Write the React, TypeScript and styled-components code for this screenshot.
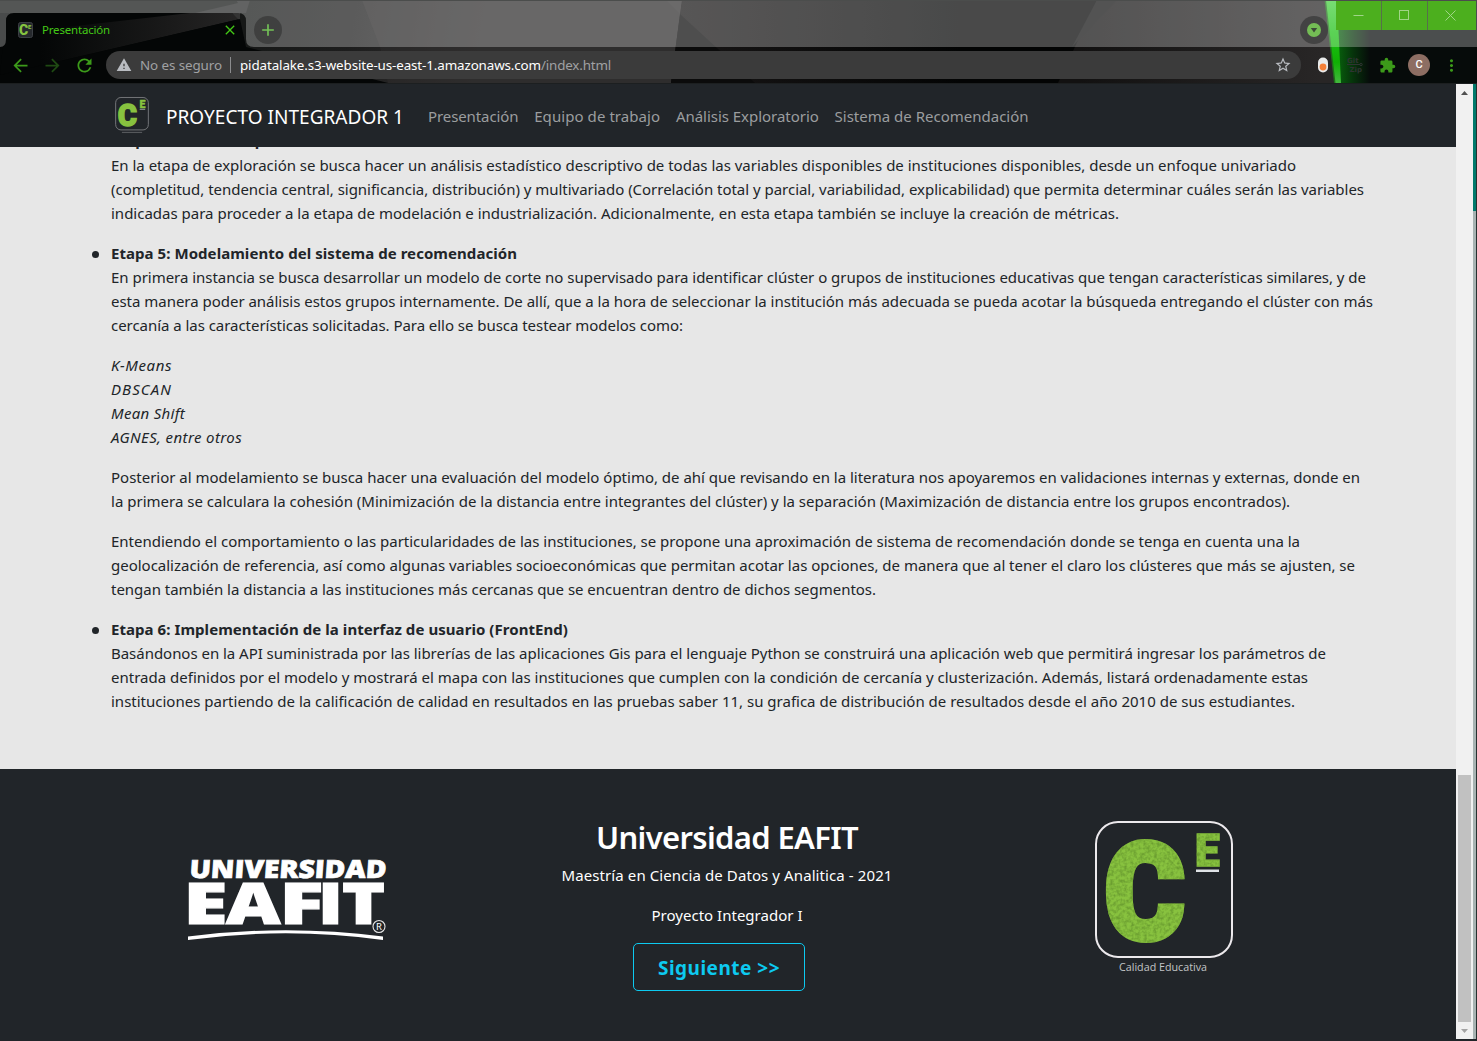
import React, { useLayoutEffect, useRef, useState } from "react";
import styled, { createGlobalStyle } from "styled-components";
import {
  MdAdd,
  MdArrowBack,
  MdArrowForward,
  MdClose,
  MdExtension,
  MdMoreVert,
  MdRefresh,
  MdStarBorder,
  MdWarning,
} from "react-icons/md";

const Global = createGlobalStyle`
  * { box-sizing: border-box; }
  body {
    margin: 0;
    background: #212529;
    font-family: "Noto Sans", "Open Sans", sans-serif;
    font-size: 15px;
    line-height: 24px;
    overflow: hidden;
  }
  svg { display: block; flex: none; }
`;

/* ---------- text that spreads over a given measure ---------- */

const Measure = styled.span`
  display: inline-block;
  white-space: pre;
  flex: none;
`;

function Fit({ w, children }: { w: number; children: string }) {
  const ref = useRef<HTMLSpanElement>(null);
  const [spacing, setSpacing] = useState(0);
  useLayoutEffect(() => {
    const el = ref.current;
    if (!el) return;
    const natural = el.getBoundingClientRect().width - spacing * children.length;
    setSpacing((w - natural) / children.length);
  }, [w, children]);
  return (
    <Measure ref={ref} style={{ letterSpacing: `${spacing}px` }}>
      {children}
    </Measure>
  );
}

/* ---------- browser window ---------- */

const Window = styled.div`
  width: 1477px;
  height: 1041px;
  display: flex;
  flex-direction: column;
  overflow: hidden;
  background: #212529;
`;

const Chrome = styled.header`
  position: relative;
  height: 84px;
  flex: none;
  color: #3c9a1a;
  border-bottom: 1px solid #1c1f20;
`;

const Backdrop = styled.svg`
  position: absolute;
  inset: 0;
`;

const TabStrip = styled.div`
  position: relative;
  height: 47px;
  display: flex;
  align-items: flex-start;
`;

const Tab = styled.div`
  margin: 13px 0 0 6px;
  width: 240px;
  height: 34px;
  padding: 0 8px 0 12px;
  display: flex;
  align-items: center;
  gap: 9px;
  color: #43c816;
  font-size: 11.5px;
`;

const Grow = styled.div`
  flex: 1;
`;

const Disc = styled.div<{ $top: number; $left: number }>`
  width: 28px;
  height: 28px;
  margin: ${(p) => p.$top}px 0 0 ${(p) => p.$left}px;
  border-radius: 50%;
  background: rgba(50, 50, 50, 0.65);
  color: #74c157;
  display: flex;
  align-items: center;
  justify-content: center;
`;

const WindowButtons = styled.div`
  display: flex;
  gap: 1px;
  margin: 1px 1px 0 8px;
  background: #56704a;
`;

const WindowButton = styled.div<{ $w: number; $pad?: number }>`
  width: ${(p) => p.$w}px;
  height: 29px;
  padding-right: ${(p) => p.$pad || 0}px;
  background: #4caf1e;
  display: flex;
  align-items: center;
  justify-content: center;
`;

const Toolbar = styled.div`
  position: relative;
  height: 36px;
  display: flex;
  align-items: center;
  padding-left: 9px;
`;

const ToolIcon = styled.div<{ $w: number; $dim?: boolean }>`
  width: ${(p) => p.$w}px;
  display: flex;
  justify-content: center;
  color: ${(p) => (p.$dim ? "#1f4a13" : "#3c9a1a")};
`;

const Address = styled.div`
  width: 1195px;
  height: 28px;
  border-radius: 14px;
  background: #3b3b3b;
  display: flex;
  align-items: center;
  padding: 0 9px 0 10px;
  font-size: 13.4px;
  color: #a0a1a3;
`;

const AddressRule = styled.div`
  width: 1px;
  height: 16px;
  background: #8b8c8e;
  margin: 0 9px 0 8px;
`;

const Host = styled.span`
  color: #fff;
`;

const AddressIcon = styled.div<{ $gap: number }>`
  margin-right: ${(p) => p.$gap}px;
  color: #b9bcc1;
`;

const Avatar = styled.div`
  width: 22px;
  height: 22px;
  margin: 0 10px 0 0;
  border-radius: 50%;
  background: #8d6e63;
  color: #fff;
  font: 500 11px/22px Roboto, sans-serif;
  text-align: center;
`;

/* ---------- page ---------- */

const Viewport = styled.div`
  display: flex;
  height: 955px;
  flex: none;
`;

const Page = styled.div`
  width: 1456px;
  display: flex;
  flex-direction: column;
  background: #e7e7e7;
  overflow: hidden;
`;

const Navbar = styled.nav`
  position: relative;
  z-index: 1;
  height: 63px;
  flex: none;
  background: #212529;
  display: flex;
  align-items: center;
  padding: 1px 0 0 112px;
`;

const NavLogo = styled.div`
  margin: -1px 14px 0 0;
`;

const Brand = styled.div`
  color: #fff;
  font-size: 19px;
  padding-top: 1px;
  margin-right: 24px;
`;

const NavLink = styled.a`
  color: #9b9d9f;
  margin-right: 15.7px;
`;

const Content = styled.main`
  flex: 1;
  margin-top: -18px;
  color: #212529;
`;

const Stages = styled.ul`
  margin: 0;
  padding: 0 0 0 111px;
  list-style: none;
`;

const Stage = styled.li`
  position: relative;

  &::before {
    content: "";
    position: absolute;
    left: -19px;
    top: 10px;
    width: 7px;
    height: 7px;
    border-radius: 50%;
    background: #212529;
  }
`;

const Paragraph = styled.p<{ $italic?: boolean }>`
  margin: 0 0 16px;
  font-style: ${(p) => (p.$italic ? "italic" : "normal")};
`;

const Line = styled.span<{ $bold?: boolean; $lift?: boolean }>`
  display: flex;
  align-items: center;
  height: 24px;
  padding-bottom: ${(p) => (p.$lift ? 3 : 0)}px;
  font-weight: ${(p) => (p.$bold ? 700 : 400)};
`;

/* ---------- footer ---------- */

const Footer = styled.footer`
  height: 270px;
  flex: none;
  background: #212529;
  color: #fff;
  display: grid;
  grid-template-columns: 438px 438px 438px;
  padding: 48px 0 0 70px;
`;

const FooterCell = styled.div<{ $top: number; $right?: number }>`
  display: flex;
  flex-direction: column;
  align-items: center;
  padding-top: ${(p) => p.$top}px;
  padding-right: ${(p) => p.$right || 0}px;
`;

const FooterTitle = styled.h2`
  margin: 1px 0 7px;
  font-size: 31px;
  line-height: 38px;
  font-weight: 600;
`;

const FooterText = styled.p`
  margin: 0 0 16px;
`;

const NextButton = styled.button`
  width: 172px;
  height: 48px;
  margin: 0 16px 0 0;
  padding: 1px 0 0;
  border: 1px solid #0dcaf0;
  border-radius: 5px;
  background: transparent;
  color: #0dcaf0;
  font: 700 19px/30px "Noto Sans", sans-serif;
`;

/* ---------- scrollbar ---------- */

const Scrollbar = styled.div`
  width: 17px;
  background: #f1f1f1;
  display: flex;
  flex-direction: column;
  align-items: center;
`;

const Arrow = styled.div`
  height: 17px;
  display: flex;
  align-items: center;
`;

const Thumb = styled.div`
  width: 13px;
  height: 247px;
  margin-top: 674px;
  background: #c1c1c1;
`;

const Edge = styled.div`
  width: 4px;
  border-right: 1px solid #26302f;
  background: linear-gradient(#00796b 127px, #a8b3b2 127px);
`;

/* ---------- drawings ---------- */

function ChromeArt() {
  return (
    <Backdrop width="1477" height="83" viewBox="0 0 1477 83">
      <defs>
        <linearGradient id="wedge" gradientUnits="userSpaceOnUse" x1="40" y1="0" x2="240" y2="0">
          <stop offset="0" stopColor="#040606" />
          <stop offset="1" stopColor="#262525" />
        </linearGradient>
        <linearGradient id="left" gradientUnits="userSpaceOnUse" x1="250" y1="0" x2="480" y2="40">
          <stop offset="0" stopColor="#161817" />
          <stop offset="0.45" stopColor="#1d1d1d" />
          <stop offset="1" stopColor="#2f2e2e" />
        </linearGradient>
        <linearGradient id="mid" gradientUnits="userSpaceOnUse" x1="680" y1="0" x2="960" y2="0">
          <stop offset="0" stopColor="#171515" />
          <stop offset="1" stopColor="#030404" />
        </linearGradient>
        <linearGradient id="right" gradientUnits="userSpaceOnUse" x1="1080" y1="0" x2="1320" y2="0">
          <stop offset="0" stopColor="#121111" />
          <stop offset="1" stopColor="#282626" />
        </linearGradient>
        <linearGradient id="glow" gradientUnits="userSpaceOnUse" x1="1336" y1="0" x2="1370" y2="0">
          <stop offset="0" stopColor="#07650c" />
          <stop offset="0.5" stopColor="#06330b" />
          <stop offset="1" stopColor="#060b0a" />
        </linearGradient>
        <linearGradient id="beam" gradientUnits="userSpaceOnUse" x1="0" y1="0" x2="0" y2="83">
          <stop offset="0" stopColor="#46cf40" />
          <stop offset="0.4" stopColor="#1cc014" />
          <stop offset="0.75" stopColor="#10b004" />
          <stop offset="1" stopColor="#43b83e" />
        </linearGradient>
      </defs>
      <rect width="1477" height="83" fill="#040606" />
      <path d="M0 0 H240 V19 L0 13 Z" fill="#121514" />
      <path d="M6 13 H246 V47 L0 75 Z" fill="#040606" />
      <path d="M0 75 L240 19 L232 13 L190 13 L40 30 Z" fill="url(#wedge)" />
      <path d="M232 13 L246 13 L246 24 L239 20 Z" fill="#343434" />
      <path d="M240 0 H682 L671 83 H240 Z" fill="url(#left)" />
      <path d="M195 13 L238 3 L236 0 H250 L246 13 Z" fill="#262727" />
      <path d="M0 83 L0 75 L240 19 L246 47 L388 83 Z" fill="#040606" />
      <path d="M362 0 L682 0 L671 83 L388 83 L380 47 Z" fill="#2d2b2b" opacity="0.5" />
      <path d="M666 0 L682 0 L680 14 Z" fill="#333131" />
      <path d="M682 0 H1105 L1060 83 H671 Z" fill="url(#mid)" />
      <path d="M680 14 L755 83 H671 Z" fill="#0b0b0b" />
      <path d="M1097 0 H1340 V83 H1058 Z" fill="url(#right)" />
      <path d="M1097 0 H1117 L1072 47 Z" fill="#111111" />
      <path d="M1336 0 H1477 V83 H1340 Z" fill="url(#glow)" />
      <path d="M1324.500 0 L1328 0 L1337 83 L1334 83 Z" fill="#1b8d15" opacity="0.7" />
      <path d="M1326 0 L1337 0 L1341 83 L1335.500 83 Z" fill="url(#beam)" />
      <path
        d="M0 0 H1477 V47 H254 Q246 47 246 39 V21 Q246 13 238 13 H14 Q6 13 6 21 V39 Q6 47 0 47 Z"
        fill="#fff"
        opacity="0.28"
      />
      <rect width="1477" height="1" fill="#4b4d4c" />
    </Backdrop>
  );
}

function QualityLogo({ w, h, id, caption }: { w: number; h: number; id: string; caption?: boolean }) {
  return (
    <svg width={w} height={h} viewBox="0 0 140 154" overflow="visible">
      <defs>
        <filter
          id={id}
          filterUnits="userSpaceOnUse"
          x="0"
          y="0"
          width="140"
          height="154"
          colorInterpolationFilters="sRGB"
        >
          <feTurbulence type="fractalNoise" baseFrequency="0.3" numOctaves="2" seed="4" />
          <feColorMatrix values="0 0 0 0 0.42  0 0 0 0 0.62  0 0 0 0 0.19  2.4 0 0 0 -0.9" />
          <feComposite in2="SourceGraphic" operator="in" result="grain" />
          <feMerge>
            <feMergeNode in="SourceGraphic" />
            <feMergeNode in="grain" />
          </feMerge>
        </filter>
      </defs>
      <rect
        x="2"
        y="2"
        width="136"
        height="135"
        rx="22"
        fill="none"
        stroke={caption ? "#ece9ec" : "#77797c"}
        strokeWidth={caption ? 2 : 4}
      />
      <g
        fill="#88c23f"
        stroke="#88c23f"
        filter={caption ? `url(#${id})` : undefined}
        fontFamily="Roboto"
        fontWeight="900"
      >
        <text transform="translate(10.500 118.7) scale(0.92 1)" fontSize="133" strokeWidth="6">
          C
        </text>
        <text transform="translate(101 46) scale(0.98 1)" fontSize="45" strokeWidth="1.5">
          E
        </text>
      </g>
      <rect x="102" y="49.5" width="23" height="2.5" fill="#dfe3e6" />
      {caption ? (
        <text
          x="25"
          y="151"
          fontFamily="Open Sans"
          fontSize="10.5"
          fill="#c3c5c7"
          textLength="88"
          lengthAdjust="spacingAndGlyphs"
        >
          Calidad Educativa
        </text>
      ) : (
        <rect x="28" y="145" width="84" height="5" fill="#55585b" />
      )}
    </svg>
  );
}

const eafit: [string, number, number][] = [
  ["E", -4.5, 44],
  ["A", 38, 54.5],
  ["F", 91.5, 44],
  ["I", 130, 25],
  ["T", 154, 43],
];

function EafitLogo() {
  return (
    <svg
      width="200"
      height="86"
      viewBox="0 0 200 86"
      fill="#fff"
      fontFamily="Open Sans"
      fontWeight="800"
      overflow="visible"
    >
      <text
        transform="translate(1 20.5) skewX(-4)"
        fontSize="25"
        textLength="197"
        lengthAdjust="spacingAndGlyphs"
        stroke="#fff"
        strokeWidth="0.7"
      >
        UNIVERSIDAD
      </text>
      <g fontSize="56.500" stroke="#fff" strokeWidth="1.2">
        {eafit.map(([c, x, w]) => (
          <text key={c} x={x} y="66.500" textLength={w} lengthAdjust="spacingAndGlyphs">
            {c}
          </text>
        ))}
      </g>
      <circle cx="191" cy="69.5" r="6" fill="#212529" stroke="#e6e6e6" strokeWidth="1.1" />
      <text x="188" y="73" fontSize="9.5" fontWeight="400" fontFamily="Noto Sans">
        R
      </text>
      <path d="M0 79.5 Q98 67 195 79.5 V83 Q98 69.5 0 83 Z" />
    </svg>
  );
}

/* ---------- copy ---------- */

type Row = [string, number];

const stages: { title: Row; blocks: { italic?: boolean; rows: Row[] }[] }[] = [
  {
    title: ["Etapa 4: Análisis exploratorio", 220],
    blocks: [
      {
        rows: [
          ["En la etapa de exploración se busca hacer un análisis estadístico descriptivo de todas las variables disponibles de instituciones disponibles, desde un enfoque univariado", 1185],
          ["(completitud, tendencia central, significancia, distribución) y multivariado (Correlación total y parcial, variabilidad, explicabilidad) que permita determinar cuáles serán las variables", 1253],
          ["indicadas para proceder a la etapa de modelación e industrialización. Adicionalmente, en esta etapa también se incluye la creación de métricas.", 1008],
        ],
      },
    ],
  },
  {
    title: ["Etapa 5: Modelamiento del sistema de recomendación", 406],
    blocks: [
      {
        rows: [
          ["En primera instancia se busca desarrollar un modelo de corte no supervisado para identificar clúster o grupos de instituciones educativas que tengan características similares, y de", 1255],
          ["esta manera poder análisis estos grupos internamente. De allí, que a la hora de seleccionar la institución más adecuada se pueda acotar la búsqueda entregando el clúster con más", 1262],
          ["cercanía a las características solicitadas. Para ello se busca testear modelos como:", 572],
        ],
      },
      {
        italic: true,
        rows: [
          ["K-Means", 61],
          ["DBSCAN", 61],
          ["Mean Shift", 74],
          ["AGNES, entre otros", 131],
        ],
      },
      {
        rows: [
          ["Posterior al modelamiento se busca hacer una evaluación del modelo óptimo, de ahí que revisando en la literatura nos apoyaremos en validaciones internas y externas, donde en", 1249],
          ["la primera se calculara la cohesión (Minimización de la distancia entre integrantes del clúster) y la separación (Maximización de distancia entre los grupos encontrados).", 1179],
        ],
      },
      {
        rows: [
          ["Entendiendo el comportamiento o las particularidades de las instituciones, se propone una aproximación de sistema de recomendación donde se tenga en cuenta una la", 1189],
          ["geolocalización de referencia, así como algunas variables socioeconómicas que permitan acotar las opciones, de manera que al tener el claro los clústeres que más se ajusten, se", 1244],
          ["tengan también la distancia a las instituciones más cercanas que se encuentran dentro de dichos segmentos.", 765],
        ],
      },
    ],
  },
  {
    title: ["Etapa 6: Implementación de la interfaz de usuario (FrontEnd)", 457],
    blocks: [
      {
        rows: [
          ["Basándonos en la API suministrada por las librerías de las aplicaciones Gis para el lenguaje Python se construirá una aplicación web que permitirá ingresar los parámetros de", 1215],
          ["entrada definidos por el modelo y mostrará el mapa con las instituciones que cumplen con la condición de cercanía y clusterización. Además, listará ordenadamente estas", 1197],
          ["instituciones partiendo de la calificación de calidad en resultados en las pruebas saber 11, su grafica de distribución de resultados desde el año 2010 de sus estudiantes.", 1184],
        ],
      },
    ],
  },
];

const links: Row[] = [
  ["Presentación", 90.5],
  ["Equipo de trabajo", 126],
  ["Análisis Exploratorio", 143],
  ["Sistema de Recomendación", 194],
];

export default function App() {
  return (
    <Window>
      <Global />
      <Chrome>
        <ChromeArt />
        <TabStrip>
          <Tab>
            <svg width="15" height="16" viewBox="0 0 15 16">
              <rect x="0.5" y="0.5" width="14" height="15" rx="2" fill="#26292d" stroke="#3c4044" />
              <text x="1" y="12.5" fontFamily="Roboto" fontWeight="900" fontSize="14" fill="#86c440">
                C
              </text>
              <text x="10" y="6.5" fontFamily="Roboto" fontWeight="900" fontSize="6" fill="#86c440">
                E
              </text>
            </svg>
            <Fit w={68}>Presentación</Fit>
            <Grow />
            <MdClose size={16} />
          </Tab>
          <Disc $top={16} $left={8}>
            <MdAdd size={20} />
          </Disc>
          <Grow />
          <Disc $top={16} $left={0}>
            <svg width="14" height="14" viewBox="0 0 14 14">
              <circle cx="7" cy="7" r="7" fill="#74bd55" />
              <path d="M3.8 5 H10.2 L7 9.5 Z" fill="#3c4a38" />
            </svg>
          </Disc>
          <WindowButtons>
            <WindowButton $w={45}>
              <svg width="11" height="11" viewBox="0 0 11 11" stroke="#a0d588" fill="none">
                <path d="M0.5 5.5 H10.5" />
              </svg>
            </WindowButton>
            <WindowButton $w={45}>
              <svg width="11" height="11" viewBox="0 0 11 11" stroke="#a0d588" fill="none">
                <rect x="0.5" y="0.5" width="9" height="9" />
              </svg>
            </WindowButton>
            <WindowButton $w={48} $pad={4}>
              <svg width="11" height="11" viewBox="0 0 11 11" stroke="#a0d588" fill="none">
                <path d="M0.5 0.5 L10.5 10.5 M10.5 0.5 L0.5 10.5" />
              </svg>
            </WindowButton>
          </WindowButtons>
        </TabStrip>
        <Toolbar>
          <ToolIcon $w={22}>
            <MdArrowBack size={21} />
          </ToolIcon>
          <ToolIcon $w={42} $dim>
            <MdArrowForward size={21} />
          </ToolIcon>
          <ToolIcon $w={22}>
            <MdRefresh size={21} />
          </ToolIcon>
          <ToolIcon $w={11} />
          <Address>
            <AddressIcon $gap={8}>
              <MdWarning size={16} />
            </AddressIcon>
            <Fit w={82}>No es seguro</Fit>
            <AddressRule />
            <Host>
              <Fit w={301}>pidatalake.s3-website-us-east-1.amazonaws.com</Fit>
            </Host>
            <Fit w={70}>/index.html</Fit>
            <Grow />
            <AddressIcon $gap={0}>
              <MdStarBorder size={18} />
            </AddressIcon>
          </Address>
          <ToolIcon $w={43}>
            <svg width="12" height="16" viewBox="0 0 12 16">
              <rect x="1" y="0.5" width="10" height="15" rx="5" fill="#e9eaea" />
              <circle cx="6" cy="10" r="3.4" fill="#f57f36" />
            </svg>
          </ToolIcon>
          <ToolIcon $w={22}>
            <svg width="18" height="18" viewBox="0 0 18 18" fill="#2f3432" fontFamily="DejaVu Sans" fontWeight="700" fontSize="7">
              <text x="1" y="6.5">Git</text>
              <text x="3.500" y="16">Zip</text>
              <path d="M1 8.5 H14" stroke="#2f3432" />
              <circle cx="15" cy="8.5" r="1.2" fill="none" stroke="#2f3432" />
            </svg>
          </ToolIcon>
          <ToolIcon $w={42}>
            <MdExtension size={17} />
          </ToolIcon>
          <Avatar>C</Avatar>
          <ToolIcon $w={22}>
            <MdMoreVert size={19} />
          </ToolIcon>
        </Toolbar>
      </Chrome>
      <Viewport>
        <Page>
          <Navbar>
            <NavLogo>
              <QualityLogo w={40} h={37} id="grainSmall" />
            </NavLogo>
            <Brand>
              <Fit w={238}>PROYECTO INTEGRADOR 1</Fit>
            </Brand>
            {links.map(([t, w]) => (
              <NavLink key={t}>
                <Fit w={w}>{t}</Fit>
              </NavLink>
            ))}
          </Navbar>
          <Content>
            <Stages>
              {stages.map((s, n) => (
                <Stage key={s.title[0]}>
                  <Line $bold $lift={n === 0}>
                    <Fit w={s.title[1]}>{s.title[0]}</Fit>
                  </Line>
                  {s.blocks.map((b, i) => (
                    <Paragraph key={i} $italic={b.italic}>
                      {b.rows.map(([t, w]) => (
                        <Line key={t}>
                          <Fit w={w}>{t}</Fit>
                        </Line>
                      ))}
                    </Paragraph>
                  ))}
                </Stage>
              ))}
            </Stages>
          </Content>
          <Footer>
            <FooterCell $top={40} $right={3}>
              <EafitLogo />
            </FooterCell>
            <FooterCell $top={0}>
              <FooterTitle>
                <Fit w={262}>Universidad EAFIT</Fit>
              </FooterTitle>
              <FooterText>
                <Fit w={331}>Maestría en Ciencia de Datos y Analitica - 2021</Fit>
              </FooterText>
              <FooterText>
                <Fit w={151}>Proyecto Integrador I</Fit>
              </FooterText>
              <NextButton>
                <Fit w={122}>{"Siguiente >>"}</Fit>
              </NextButton>
            </FooterCell>
            <FooterCell $top={3} $right={2}>
              <QualityLogo w={140} h={154} id="grainLarge" caption />
            </FooterCell>
          </Footer>
        </Page>
        <Scrollbar>
          <Arrow>
            <svg width="7" height="4" viewBox="0 0 7 4">
              <path d="M3.5 0 L7 4 H0 Z" fill="#505050" />
            </svg>
          </Arrow>
          <Thumb />
          <Arrow>
            <svg width="7" height="4" viewBox="0 0 7 4">
              <path d="M3.5 4 L7 0 H0 Z" fill="#a3a3a3" />
            </svg>
          </Arrow>
        </Scrollbar>
        <Edge />
      </Viewport>
    </Window>
  );
}
